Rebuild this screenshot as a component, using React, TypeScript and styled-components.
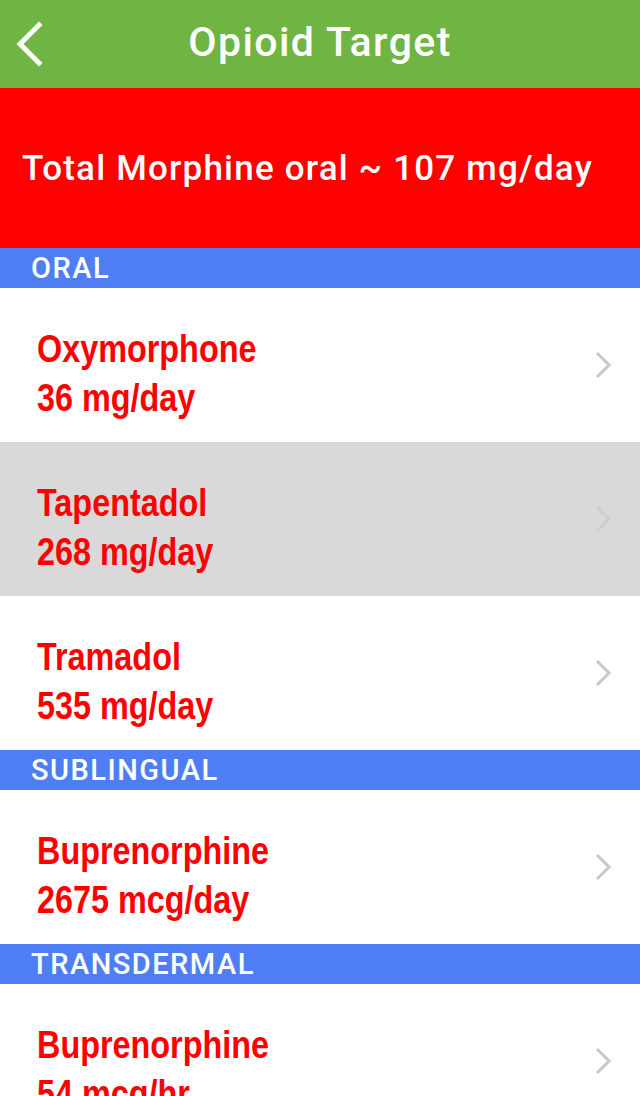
import React from 'react'
import styled, { createGlobalStyle } from 'styled-components'

const GlobalStyle = createGlobalStyle`
  html, body {
    margin: 0;
    padding: 0;
    background: #fff;
  }
`

interface IDrug {
  name: string
  dose: string
  selected?: boolean
}

interface ISection {
  title: string
  drugs: IDrug[]
}

const sections: ISection[] = [
  {
    title: 'ORAL',
    drugs: [
      { name: 'Oxymorphone', dose: '36 mg/day' },
      { name: 'Tapentadol', dose: '268 mg/day', selected: true },
      { name: 'Tramadol', dose: '535 mg/day' },
    ],
  },
  {
    title: 'SUBLINGUAL',
    drugs: [{ name: 'Buprenorphine', dose: '2675 mcg/day' }],
  },
  {
    title: 'TRANSDERMAL',
    drugs: [{ name: 'Buprenorphine', dose: '54 mcg/hr' }],
  },
]

const Screen = styled.div`
  width: 640px;
  height: 1096px;
  overflow: hidden;
  background: #fff;
`

const NavBar = styled.header`
  position: relative;
  height: 88px;
  display: flex;
  align-items: center;
  justify-content: center;
  background: #70b443;
`

const BackButton = styled.button`
  position: absolute;
  left: 12px;
  top: 20px;
  padding: 0;
  border: 0;
  background: none;
  width: 36px;
  height: 48px;
`

const Title = styled.h1`
  margin: 0;
  font-family: Roboto, "Liberation Sans", sans-serif;
  font-weight: 500;
  font-size: 41px;
  letter-spacing: 1.4px;
  color: #fff;
  line-height: 1;
  transform: translateY(-2px);
`

const Banner = styled.div`
  height: 160px;
  display: flex;
  align-items: center;
  padding-left: 22px;
  background: #ff0000;
  color: #fff;
  font-family: Roboto, "Liberation Sans", sans-serif;
  font-weight: 500;
  font-size: 35px;
  letter-spacing: 1.2px;
`

const SectionHeader = styled.div<{ $underline?: boolean }>`
  height: 40px;
  box-sizing: border-box;
  display: flex;
  align-items: center;
  padding-left: 31px;
  background: #4f7ef4;
  color: #fff;
  font-family: Roboto, "Liberation Sans", sans-serif;
  font-weight: 500;
  font-size: 29px;
  letter-spacing: 1.5px;
  box-shadow: ${p => (p.$underline ? 'inset 30px -1px 0 #4f7ef4, inset 0 -1px 0 #a9a9a9' : 'none')};
`

const Row = styled.div<{ $selected?: boolean }>`
  height: 154px;
  box-sizing: border-box;
  display: flex;
  align-items: center;
  padding: 0 28px 0 37px;
  background: ${p => (p.$selected ? '#d9d9d9' : '#fff')};
  box-shadow: ${p => (p.$selected ? 'inset 30px -1px 0 #d9d9d9, inset 0 -1px 0 #a9a9a9' : 'none')};
`

const RowText = styled.div`
  flex: 1;
  padding-top: 16px;
  font-family: "Liberation Sans", Arial, sans-serif;
  font-weight: 700;
  font-size: 39px;
  line-height: 49px;
  color: #ff0000;
  transform: scaleX(0.83);
  transform-origin: left center;
`

const Line = styled.div`
  white-space: nowrap;
`

const Chevron = ({ color }: { color: string }) => (
  <svg width="18" height="28" viewBox="0 0 18 28">
    <path d="M3 2 L15 14 L3 26" fill="none" stroke={color} strokeWidth="3" />
  </svg>
)

const App = () => {
  return <Screen>
    <GlobalStyle />
    <NavBar>
      <BackButton>
        <svg width="36" height="48" viewBox="0 0 36 48">
          <path d="M27 5 L8 24 L27 43" fill="none" stroke="#fff" strokeWidth="5" strokeLinecap="square" />
        </svg>
      </BackButton>
      <Title>Opioid Target</Title>
    </NavBar>
    <Banner>Total Morphine oral ~ 107 mg/day</Banner>
    {
      sections.map(section => <React.Fragment key={section.title}>
        <SectionHeader $underline={section.title === 'ORAL'}>{section.title}</SectionHeader>
        {
          section.drugs.map(drug => <Row key={section.title + drug.name} $selected={drug.selected}>
            <RowText>
              <Line>{drug.name}</Line>
              <Line>{drug.dose}</Line>
            </RowText>
            <Chevron color={drug.selected ? '#cdcdd1' : '#c7c7cc'} />
          </Row>)
        }
      </React.Fragment>)
    }
  </Screen>
}

export default App
